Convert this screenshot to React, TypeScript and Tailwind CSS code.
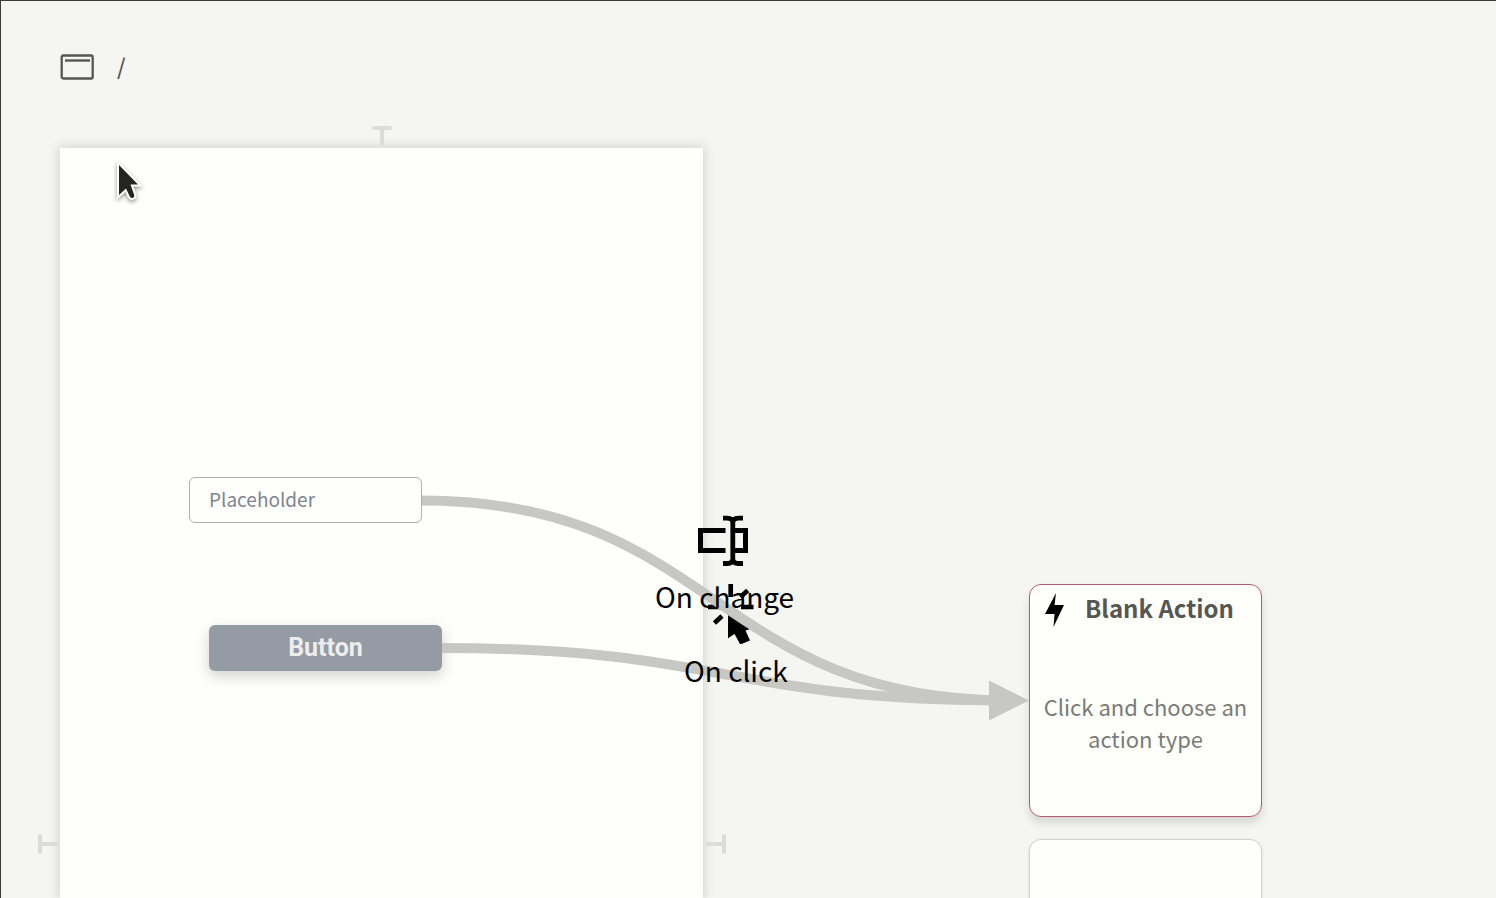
const sans = "font-['Noto_Sans_CJK_SC','Noto_Sans',sans-serif]";

function WindowIcon() {
  return (
    <svg width="34" height="26" viewBox="0 0 34 26" fill="none" stroke="#565752" aria-hidden="true">
      <rect x="1.7" y="1.5" width="31" height="23" rx="1.5" strokeWidth="2.3" />
      <path d="M5 6.5H30" strokeWidth="2.4" />
    </svg>
  );
}

function ChangeIcon() {
  return (
    <svg className="block" width="52" height="52" viewBox="0 0 52 52" fill="none" stroke="#000" strokeWidth="5" aria-hidden="true">
      <path d="M28.5 15.5H3.5V35.5H28.5" />
      <path d="M36 15.5H48.5V35.5H36" />
      <path d="M26 3.2H30Q35.8 3.2 35.8 8V44Q35.8 48.5 30 48.5H26M46 3.2H41.5Q35.8 3.2 35.8 8V44Q35.8 48.5 41.5 48.5H46" strokeWidth="4.8" />
    </svg>
  );
}

function ClickIcon() {
  return (
    <svg className="block" width="52" height="64" viewBox="0 0 52 64" aria-hidden="true">
      <path d="M22 31.5V58.3L28.5 54L34.3 64.5L44 60.5L39.5 50.5L46 48.5Z" />
      <path d="M24.7 4V17M2 27H14.5M35 27H47.5M41.7 10.5L34.5 17M16 36L8.5 43" stroke="#000" strokeWidth="4.7" />
    </svg>
  );
}

function BoltIcon() {
  return (
    <svg className="shrink-0" width="20" height="34" viewBox="0 0 20 34" aria-hidden="true">
      <path d="M11 0L9.5 12H19L8.5 34L9.5 21H0Z" />
    </svg>
  );
}

function Pin({ className }: { className: string }) {
  return (
    <svg className={className} width="20" height="20" viewBox="0 0 20 20" fill="#dcddd9" aria-hidden="true">
      <path d="M0.5 0H19.5V4H12V20H8V4H0.5Z" />
    </svg>
  );
}

function Pointer() {
  return (
    <svg className="overflow-visible drop-shadow-[0_2px_2px_rgba(0,0,0,0.4)]" width="30" height="44" viewBox="0 0 30 44" aria-hidden="true">
      <path
        d="M3 4V34L10 27.5L13.5 35Q15 38 17.5 36.5Q19 35.5 18 33.5L14.5 23.5H22Z"
        fill="#242423"
        stroke="#fff"
        strokeWidth="4"
        strokeLinejoin="miter"
        paintOrder="stroke"
      />
    </svg>
  );
}

export default function App() {
  return (
    <main className={`flex h-screen flex-col overflow-hidden border-l border-t border-[#3b3b3b] bg-[#f5f6f2] ${sans}`}>
      <header className="flex h-[99px] shrink-0 items-center gap-[23px] px-[59px] pt-8 text-[22px] font-medium text-[#565752]">
        <WindowIcon />
        <span className="pb-0.5">/</span>
      </header>

      <section className="relative flex min-h-0 flex-1 items-stretch" aria-label="Canvas">
        <div className="ml-9 flex items-stretch">
          <div className="relative ml-[23px] mt-12 flex w-[643px] flex-col bg-[#fefffb] pt-[329px] shadow-[0_0_10px_2px_rgba(0,0,0,0.13)]">
            <Pin className="absolute -top-[22px] left-1/2 -translate-x-1/2" />
            <Pin className="absolute right-full top-[686px] mr-0.5 -rotate-90" />
            <Pin className="absolute left-full top-[686px] ml-[3px] rotate-90" />
            <input
              aria-label="Placeholder"
              placeholder="Placeholder"
              className="ml-[129px] h-[46px] w-[233px] shrink-0 rounded-md border border-[#b0b1ad] bg-[#fefffb] px-[19px] pb-1 text-[19px] placeholder:text-[#7e8591]"
            />
            <button className="ml-[149px] mt-[102px] h-[46px] w-[233px] shrink-0 rounded-md bg-[#949ba5] font-['Roboto',sans-serif] text-[25px] font-bold text-[#ecedec] shadow-[0_5px_14px_rgba(0,0,0,0.18)]">
              Button
            </button>
          </div>
        </div>

        <div className="ml-[326px] flex flex-col gap-[22px] pt-[484px]">
          <button className="flex h-[233px] w-[233px] shrink-0 flex-col rounded-xl border border-[#b55a72] bg-[#fefffb] px-[15px] pt-2 shadow-[0_6px_8px_rgba(0,0,0,0.12)]">
            <span className="flex h-[34px] items-center gap-5 whitespace-nowrap text-2xl font-bold text-[#565752]">
              <BoltIcon />
              <span className="pb-1">Blank Action</span>
            </span>
            <span className="mt-[63px] self-center whitespace-nowrap text-center text-[22px] leading-8 text-[#7a7b76]">
              Click and choose an
              <br />
              action type
            </span>
          </button>
          <div className="h-[233px] w-[233px] shrink-0 rounded-xl border border-[#d2d3cf] bg-[#fefffb] shadow-sm" />
        </div>

        <svg className="pointer-events-none absolute left-0 top-0 overflow-visible" width="1" height="1" aria-hidden="true">
          <path d="M441 548C724 548 724 600.5 1008 600.5" fill="none" stroke="#c7c8c3" strokeWidth="10" />
        </svg>
        <div className="absolute left-[683px] top-[480px] flex flex-col items-center text-[28px] leading-10">
          <div className="mr-2"><ClickIcon /></div>
          <span className="mt-1.5">On click</span>
        </div>
        <svg className="pointer-events-none absolute left-0 top-0 overflow-visible" width="1" height="1" aria-hidden="true">
          <path d="M421 400.5C714 400.5 714 600.5 1008 600.5" fill="none" stroke="#c7c8c3" strokeWidth="10" />
          <path d="M988 580.5V620.5L1028 600.5Z" fill="#c7c8c3" />
        </svg>
        <div className="absolute left-[654px] top-[415px] flex flex-col items-center text-[28px] leading-10">
          <div className="mr-1"><ChangeIcon /></div>
          <span className="mt-[9px]">On change</span>
        </div>
        <div className="pointer-events-none absolute left-[115px] top-[61px]">
          <Pointer />
        </div>
      </section>
    </main>
  );
}
